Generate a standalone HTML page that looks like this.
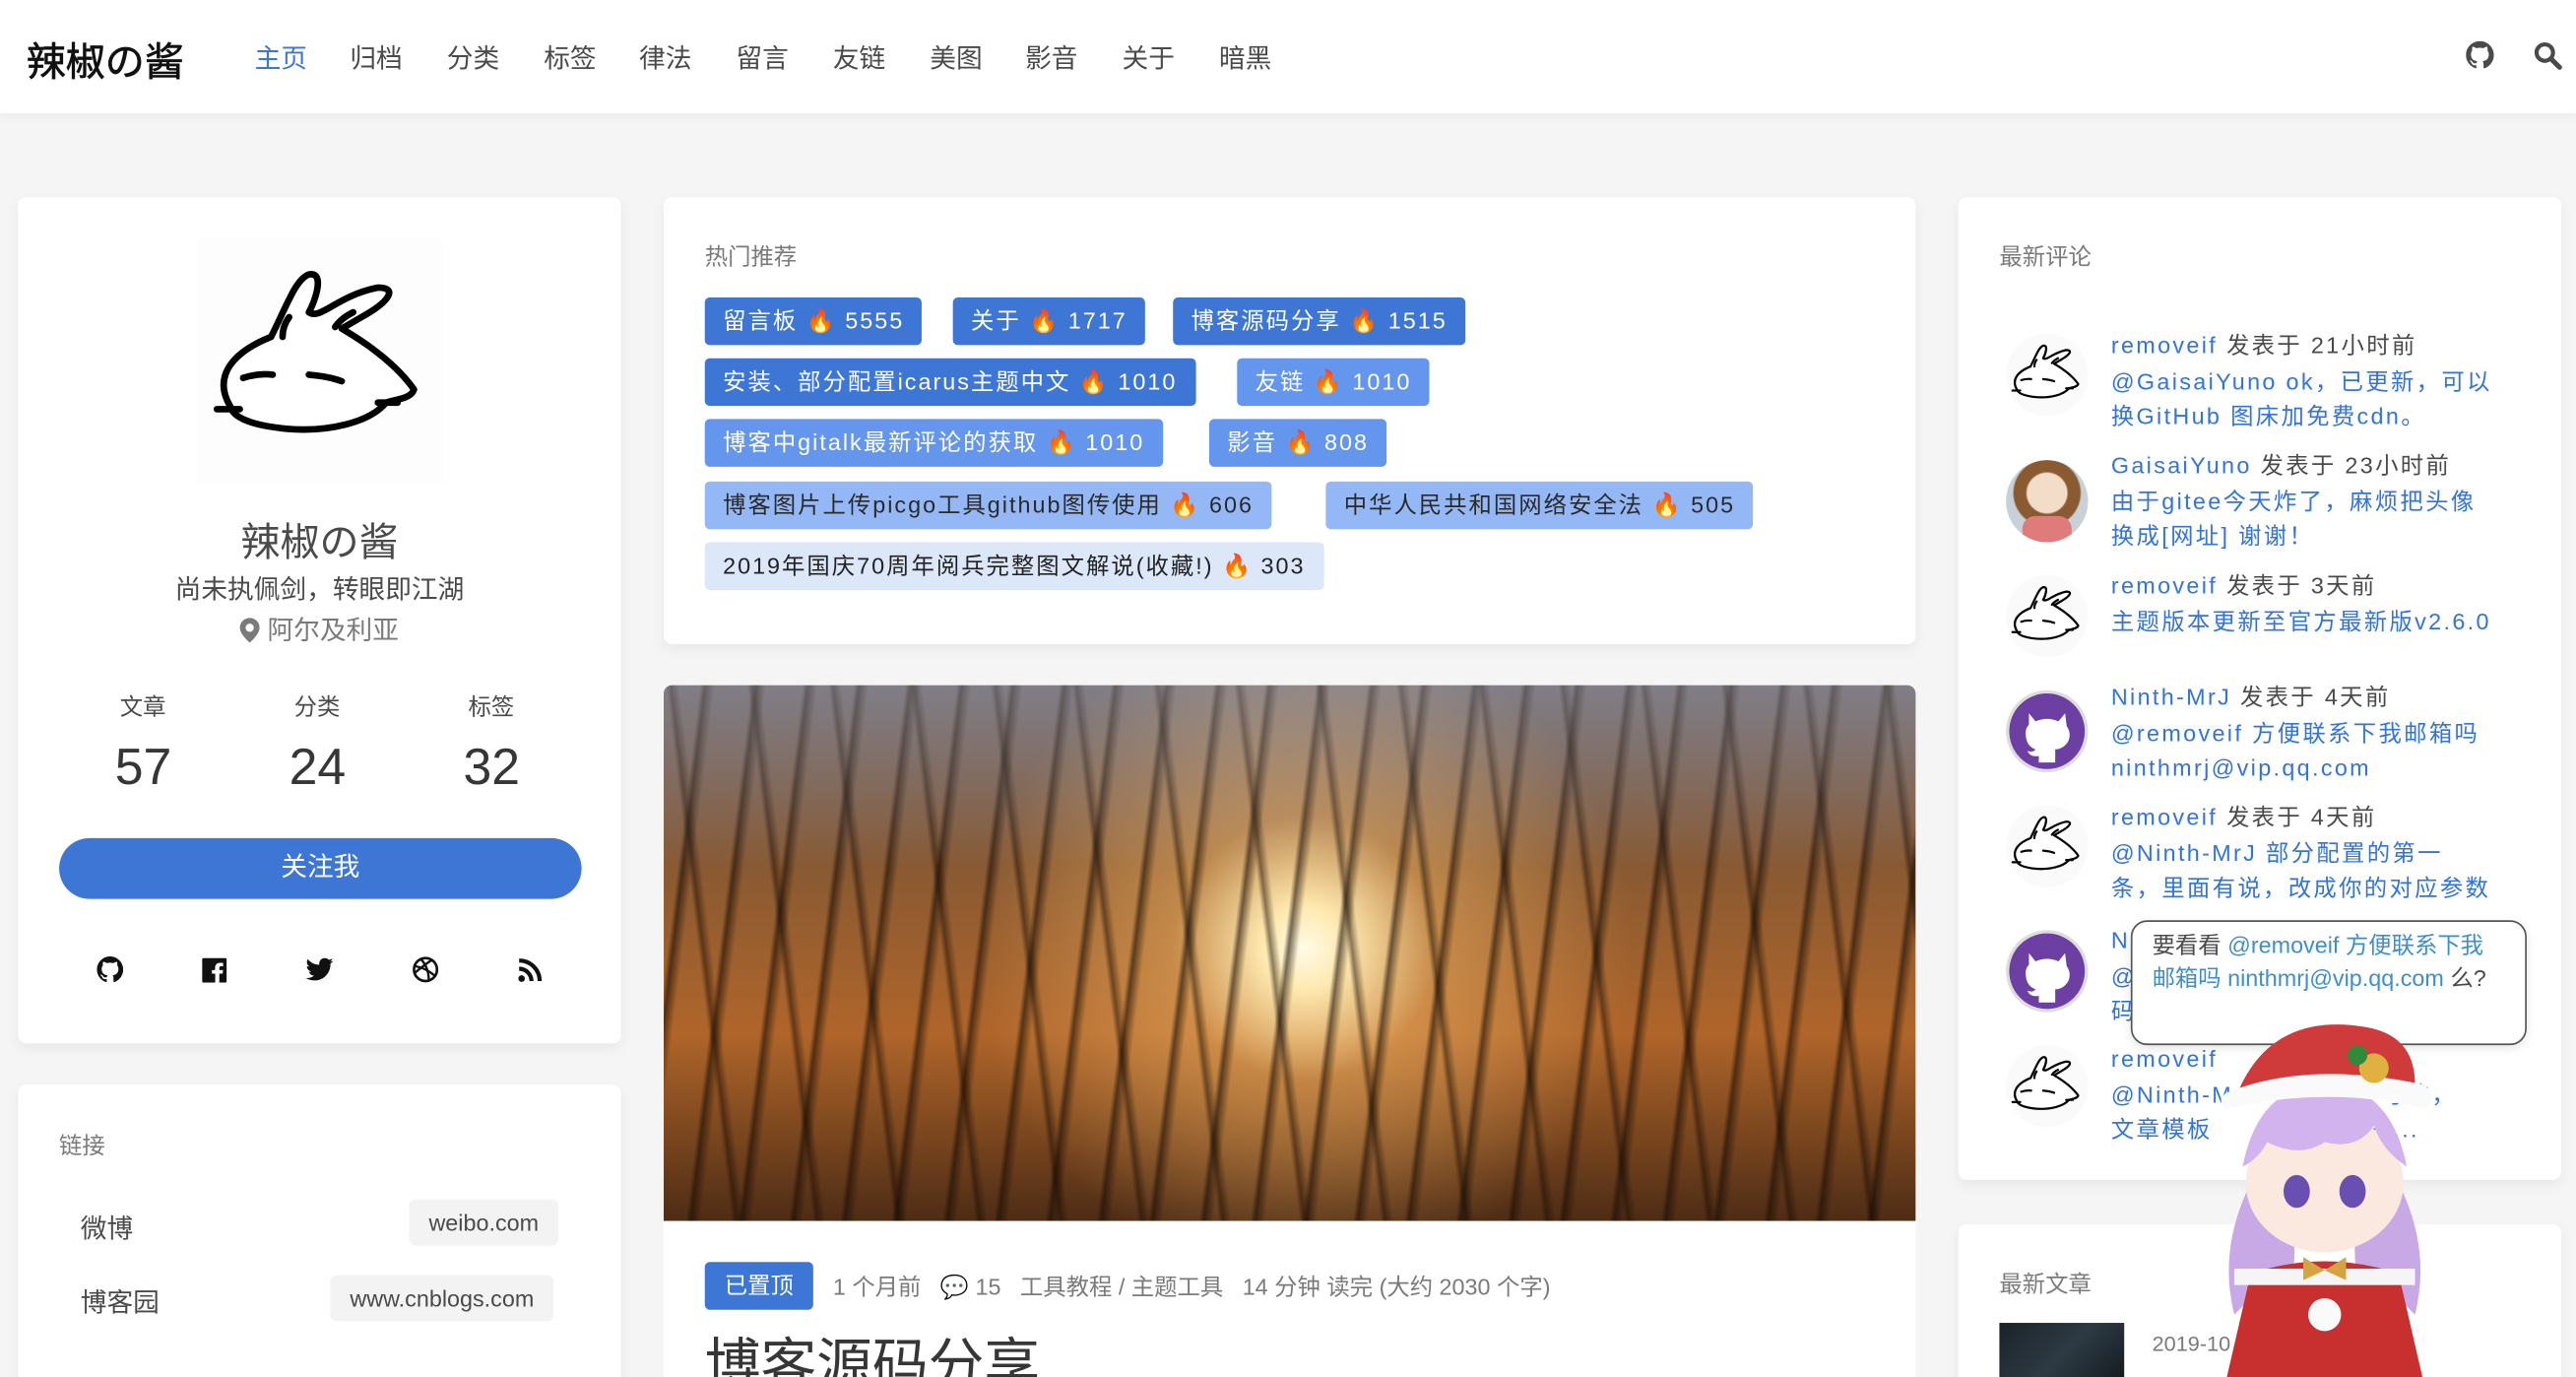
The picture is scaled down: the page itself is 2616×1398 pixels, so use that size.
<!DOCTYPE html>
<html><head><meta charset="utf-8">
<style>
*{margin:0;padding:0;box-sizing:border-box}
html,body{width:2616px;height:1398px;overflow:hidden;background:#f5f5f5}
#w{width:1568px;height:838px;transform:scale(1.66837);transform-origin:0 0;position:relative;font-family:"Liberation Sans","Noto Sans CJK SC",sans-serif;color:#4a4a4a;background:#f5f5f5}
.a{position:absolute}
.nav{left:0;top:0;width:1568px;height:69px;background:#fff;box-shadow:0 2px 6px rgba(0,0,0,.05)}
.nav span{position:absolute;top:22px;font-size:16px;color:#4a4a4a}
.card{background:#fff;border-radius:5px;box-shadow:0 3px 8px rgba(10,10,10,.06)}
.tag{position:absolute;height:29px;line-height:29px;padding:0 11px;border-radius:3px;font-size:14px;letter-spacing:1.2px;color:#fff;white-space:nowrap}
.t1{background:#3e76d6}.t2{background:#6596ee}.t3{background:#94b7f5;color:#2a2a2a}.t4{background:#dde7fa;color:#222}
.cm{position:absolute;left:1285px;font-size:14px;line-height:21.5px;letter-spacing:1.4px;color:#3273dc;white-space:nowrap}
.cm b{font-weight:normal;color:#4a4a4a}
.av{position:absolute;left:1221px;width:50px;height:50px;border-radius:50%;background:#fafafa;overflow:hidden}
.gh{background:#6e3fa3;border:2px solid #ddd}
</style></head><body><div id="w">
<div class="a nav">
<div class="a" style="left:16px;top:18px;font-size:24px;color:#111;-webkit-text-stroke:.4px #111">辣椒の酱</div>
<span style="left:155px;color:#3e76d6">主页</span><span style="left:213px">归档</span><span style="left:272px">分类</span><span style="left:331px">标签</span><span style="left:389px">律法</span><span style="left:448px">留言</span><span style="left:507px">友链</span><span style="left:566px">美图</span><span style="left:624px">影音</span><span style="left:683px">关于</span><span style="left:742px">暗黑</span>
<svg class="a" style="left:1501px;top:25px" width="17" height="17" viewBox="0 0 16 16"><path fill="#4a4a4a" d="M8 0C3.6 0 0 3.6 0 8c0 3.5 2.3 6.5 5.5 7.6.4.1.5-.2.5-.4v-1.4c-2.2.5-2.7-1-2.7-1-.4-.9-.9-1.2-.9-1.2-.7-.5.1-.5.1-.5.8.1 1.2.8 1.2.8.7 1.200 1.9.9 2.3.7.1-.5.3-.9.5-1.1-1.8-.2-3.6-.9-3.6-4 0-.9.3-1.6.8-2.1-.1-.2-.4-1 .1-2.1 0 0 .7-.2 2.2.8.6-.2 1.3-.3 2-.3s1.4.1 2 .3c1.5-1 2.2-.8 2.2-.8.4 1.1.2 1.9.1 2.1.5.6.8 1.3.8 2.1 0 3.1-1.9 3.8-3.6 4 .3.3.6.8.6 1.5v2.2c0 .2.1.5.6.4C13.7 14.5 16 11.5 16 8c0-4.4-3.6-8-8-8z"/></svg>
<svg class="a" style="left:1542px;top:25px" width="18" height="18" viewBox="0 0 18 18"><circle cx="7" cy="7" r="5" fill="none" stroke="#4a4a4a" stroke-width="2.5"/><path d="M11 11l5 5" stroke="#4a4a4a" stroke-width="3" stroke-linecap="round"/></svg>
</div>

<svg width="0" height="0" style="position:absolute"><defs><g id="rb"><path d="M20 102C10 85 20 70 45 60C55 40 60 25 68 22C78 20 72 38 68 45C75 50 85 35 110 30C122 30 118 38 100 48L88 55C100 62 120 75 132 92C130 98 120 98 115 100C105 112 80 118 55 116C35 114 22 110 20 102Z" fill="#fff" stroke="#000" stroke-width="4" stroke-linejoin="round"/><path d="M12 104h14M110 100l12 0M56 48c-3 4-4 8-4 12M95 45c-6 3-9 6-11 9M28 85q9-3 18-2M68 83q12 1 20 4" stroke="#000" stroke-width="4" fill="none" stroke-linecap="round"/></g></defs></svg>

<!-- left profile -->
<div class="a card" style="left:11px;top:120px;width:367px;height:515px">
<svg class="a" style="left:109px;top:25px" width="150" height="150" viewBox="0 0 150 150"><rect width="150" height="150" fill="#fdfdfd"/><use href="#rb"/></svg>
<div class="a" style="left:0;width:367px;top:190px;text-align:center;font-size:24px;color:#4a4a4a">辣椒の酱</div>
<div class="a" style="left:0;width:367px;top:225px;text-align:center;font-size:16px">尚未执佩剑，转眼即江湖</div>
<div class="a" style="left:0;width:367px;top:250px;text-align:center;font-size:16px;color:#7a7a7a"><svg width="12" height="15" viewBox="0 0 12 15" style="vertical-align:-2px"><path d="M6 0a6 6 0 0 0-6 6c0 4 6 9 6 9s6-5 6-9a6 6 0 0 0-6-6zm0 8.5a2.5 2.5 0 1 1 0-5 2.5 2.5 0 0 1 0 5z" fill="#7a7a7a"/></svg> 阿尔及利亚</div>
<div class="a" style="left:62px;top:300px;font-size:14px">文章</div><div class="a" style="left:168px;top:300px;font-size:14px">分类</div><div class="a" style="left:274px;top:300px;font-size:14px">标签</div>
<div class="a" style="left:59px;top:329px;font-size:31px;color:#363636">57</div><div class="a" style="left:165px;top:329px;font-size:31px;color:#363636">24</div><div class="a" style="left:271px;top:329px;font-size:31px;color:#363636">32</div>
<div class="a" style="left:25px;top:390px;width:318px;height:37px;border-radius:19px;background:#3e76d6;color:#fff;text-align:center;line-height:37px;font-size:16px">关注我</div>
<svg class="a" style="left:48px;top:462px" width="16" height="16" viewBox="0 0 16 16"><path fill="#111" d="M8 0C3.6 0 0 3.6 0 8c0 3.5 2.3 6.5 5.5 7.6.4.1.5-.2.5-.4v-1.4c-2.2.5-2.7-1-2.7-1-.4-.9-.9-1.2-.9-1.2-.7-.5.1-.5.1-.5.8.1 1.2.8 1.2.8.7 1.2 1.9.9 2.3.7.1-.5.3-.9.5-1.1-1.8-.2-3.6-.9-3.6-4 0-.9.3-1.6.8-2.1-.1-.2-.4-1 .1-2.1 0 0 .7-.2 2.2.8.6-.2 1.3-.3 2-.3s1.4.1 2 .3c1.5-1 2.2-.8 2.2-.8.4 1.1.2 1.9.1 2.1.5.6.8 1.3.8 2.1 0 3.1-1.9 3.8-3.6 4 .3.3.6.8.6 1.5v2.2c0 .2.1.5.6.4C13.7 14.5 16 11.5 16 8c0-4.4-3.6-8-8-8z"/></svg>
<svg class="a" style="left:112px;top:463px" width="15" height="15" viewBox="0 0 15 15"><rect width="15" height="15" rx="1" fill="#111"/><path d="M10.5 15V9.5h2l.3-2.2h-2.3V6c0-.6.2-1 1-1h1.3V3a15 15 0 0 0-1.9-.1c-1.8 0-3 1.1-3 3.1v1.3H6v2.2h2V15z" fill="#fff"/></svg>
<svg class="a" style="left:175px;top:463px" width="17" height="14" viewBox="0 0 24 20"><path fill="#111" d="M24 2.4a10 10 0 0 1-2.8.8A5 5 0 0 0 23.3.4a10 10 0 0 1-3.1 1.2A4.9 4.9 0 0 0 11.8 6 14 14 0 0 1 1.7.9a4.9 4.9 0 0 0 1.5 6.6 4.9 4.9 0 0 1-2.2-.6 4.9 4.9 0 0 0 3.9 4.9 5 5 0 0 1-2.2.1 4.9 4.9 0 0 0 4.6 3.4A9.9 9.9 0 0 1 0 17.3 14 14 0 0 0 7.5 19.5c9.1 0 14-7.5 14-14v-.6A10 10 0 0 0 24 2.4z"/></svg>
<svg class="a" style="left:240px;top:462px" width="16" height="16" viewBox="0 0 16 16"><circle cx="8" cy="8" r="7" fill="none" stroke="#111" stroke-width="1.6"/><path d="M2 6q6 1 12 6M5 1.5q5 5 5 13M1.5 10q6-5 10-7.5" fill="none" stroke="#111" stroke-width="1.4"/></svg>
<svg class="a" style="left:304px;top:463px" width="15" height="15" viewBox="0 0 15 15"><circle cx="2.5" cy="12.5" r="2" fill="#111"/><path d="M1 6.5a7.5 7.5 0 0 1 7.5 7.5M1 1.5A12.5 12.5 0 0 1 13.5 14" fill="none" stroke="#111" stroke-width="2.5"/></svg>
</div>

<!-- links -->
<div class="a card" style="left:11px;top:660px;width:367px;height:200px">
<div class="a" style="left:25px;top:27px;font-size:14px;color:#7a7a7a">链接</div>
<div class="a" style="left:38px;top:74px;font-size:16px">微博</div>
<div class="a" style="left:238px;top:70px;height:28px;line-height:28px;padding:0 12px;background:#f3f3f3;border-radius:4px;font-size:14px">weibo.com</div>
<div class="a" style="left:190px;top:116px;height:28px;line-height:28px;padding:0 12px;background:#f3f3f3;border-radius:4px;font-size:14px">www.cnblogs.com</div>
<div class="a" style="left:38px;top:119px;font-size:16px">博客园</div>
</div>

<!-- hot -->
<div class="a card" style="left:404px;top:120px;width:762px;height:272px">
<div class="a" style="left:25px;top:26px;font-size:14px;color:#7a7a7a">热门推荐</div>
<div class="tag t1" style="left:25px;top:61px">留言板 🔥 5555</div>
<div class="tag t1" style="left:176px;top:61px">关于 🔥 1717</div>
<div class="tag t1" style="left:310px;top:61px">博客源码分享 🔥 1515</div>
<div class="tag t1" style="left:25px;top:98px">安装、部分配置icarus主题中文 🔥 1010</div>
<div class="tag t2" style="left:349px;top:98px">友链 🔥 1010</div>
<div class="tag t2" style="left:25px;top:135px">博客中gitalk最新评论的获取 🔥 1010</div>
<div class="tag t2" style="left:332px;top:135px">影音 🔥 808</div>
<div class="tag t3" style="left:25px;top:173px">博客图片上传picgo工具github图传使用 🔥 606</div>
<div class="tag t3" style="left:403px;top:173px">中华人民共和国网络安全法 🔥 505</div>
<div class="tag t4" style="left:25px;top:210px">2019年国庆70周年阅兵完整图文解说(收藏!) 🔥 303</div>
</div>

<!-- image -->
<div class="a" style="left:404px;top:417px;width:762px;height:326px;border-radius:5px 5px 0 0;overflow:hidden;background:linear-gradient(180deg,#5e5a60 0%,#8a5a32 35%,#b0652a 65%,#4d2c15 100%)">
<div class="a" style="left:0;top:0;width:762px;height:326px;background:radial-gradient(circle at 390px 160px,#fffbe8 0,#ffe9b0 25px,rgba(240,180,100,.5) 80px,rgba(0,0,0,0) 200px)"></div>
<div class="a" style="left:0;top:0;width:762px;height:326px;background:repeating-linear-gradient(97deg,rgba(30,15,5,0) 0,rgba(30,15,5,0) 22px,rgba(25,12,4,.6) 25px,rgba(30,15,5,0) 31px),repeating-linear-gradient(83deg,rgba(30,15,5,0) 0,rgba(30,15,5,0) 41px,rgba(25,12,4,.5) 44px,rgba(30,15,5,0) 49px)"></div>
<div class="a" style="left:0;top:0;width:762px;height:110px;background:linear-gradient(180deg,rgba(210,210,225,.3),rgba(0,0,0,0))"></div>
</div>
<div class="a" style="left:404px;top:743px;width:762px;height:100px;background:#fff">
<div class="a" style="left:25px;top:25px;height:29px;line-height:29px;padding:0 12px;background:#3e76d6;color:#fff;border-radius:3px;font-size:14px">已置顶</div>
<div class="a" style="left:103px;top:30px;font-size:14px;color:#7a7a7a;white-space:nowrap">1 个月前 &nbsp; 💬 15 &nbsp; 工具教程 / 主题工具 &nbsp; 14 分钟 读完 (大约 2030 个字)</div>
<div class="a" style="left:25px;top:60px;font-size:34px;color:#363636">博客源码分享</div>
</div>

<!-- comments -->
<div class="a card" style="left:1192px;top:120px;width:367px;height:598px">
<div class="a" style="left:25px;top:26px;font-size:14px;color:#7a7a7a">最新评论</div>
</div>
<div class="av" style="top:203px"><svg width="50" height="50" viewBox="0 0 150 150"><use href="#rb"/></svg></div>
<div class="av" style="top:280px;background:radial-gradient(circle at 50% 40%,#f3dcc8 0 12px,#8a5a30 13px 20px,#c8d0d8 21px)"><div class="a" style="left:10px;top:34px;width:30px;height:16px;background:#e07b7b;border-radius:8px 8px 0 0"></div></div>
<div class="av" style="top:350px"><svg width="50" height="50" viewBox="0 0 150 150"><use href="#rb"/></svg></div>
<div class="av gh" style="top:420px"><svg width="46" height="46" viewBox="0 0 46 46"><path d="M12 12l4 5q7-3 14 0l4-5 1 8q3 4 1 9-3 5-8 5v8h-10v-4q-5 1-7-3 4 1 5-1-6-2-6-10 0-3 2-5z" fill="#fff"/></svg></div>
<div class="av" style="top:490px"><svg width="50" height="50" viewBox="0 0 150 150"><use href="#rb"/></svg></div>
<div class="av gh" style="top:566px"><svg width="46" height="46" viewBox="0 0 46 46"><path d="M12 12l4 5q7-3 14 0l4-5 1 8q3 4 1 9-3 5-8 5v8h-10v-4q-5 1-7-3 4 1 5-1-6-2-6-10 0-3 2-5z" fill="#fff"/></svg></div>
<div class="av" style="top:636px"><svg width="50" height="50" viewBox="0 0 150 150"><use href="#rb"/></svg></div>
<div class="cm" style="top:200px">removeif <b>发表于 21小时前</b><br>@GaisaiYuno ok，已更新，可以<br>换GitHub 图床加免费cdn。</div>
<div class="cm" style="top:273px">GaisaiYuno <b>发表于 23小时前</b><br>由于gitee今天炸了，麻烦把头像<br>换成[网址] 谢谢！</div>
<div class="cm" style="top:346px">removeif <b>发表于 3天前</b><br>主题版本更新至官方最新版v2.6.0</div>
<div class="cm" style="top:414px">Ninth-MrJ <b>发表于 4天前</b><br>@removeif 方便联系下我邮箱吗<br>ninthmrj@vip.qq.com</div>
<div class="cm" style="top:487px">removeif <b>发表于 4天前</b><br>@Ninth-MrJ 部分配置的第一<br>条，里面有说，改成你的对应参数</div>
<div class="cm" style="top:562px">N<br>@<br>码</div>
<div class="cm" style="top:634px">removeif<br>@Ninth-M &nbsp; &nbsp; &nbsp; &nbsp; &nbsp; &nbsp; &nbsp; &nbsp; 写的，<br>文章模板 &nbsp; &nbsp; &nbsp; &nbsp; &nbsp; &nbsp; &nbsp; 章的...</div>

<!-- latest posts -->
<div class="a card" style="left:1192px;top:745px;width:367px;height:120px">
<div class="a" style="left:25px;top:26px;font-size:14px;color:#7a7a7a">最新文章</div>
<div class="a" style="left:25px;top:60px;width:76px;height:40px;background:linear-gradient(135deg,#1a2228,#2d3a44 50%,#12181c)"></div>
<div class="a" style="left:118px;top:65px;font-size:13px;color:#7a7a7a">2019-10</div>
</div>

<!-- mascot -->
<div class="a" style="left:1297px;top:560px;width:241px;height:76px;background:#fff;border:1.5px solid #555;border-radius:10px;box-shadow:0 2px 6px rgba(0,0,0,.1);padding:4px 12px;font-size:14px;line-height:20px;color:#4a4a4a">要看看 <span style="color:#3e8ecf">@removeif 方便联系下我邮箱吗 ninthmrj@vip.qq.com</span> 么?</div>
<svg class="a" style="left:1330px;top:600px" width="170" height="240" viewBox="0 0 170 240">
<path d="M40 120q-20 40-10 80l20-20 10 20q10-30 5-60z" fill="#c9a8e6"/>
<path d="M130 120q20 40 10 80l-20-20-10 20q-10-30-5-60z" fill="#c9a8e6"/>
<ellipse cx="85" cy="120" rx="48" ry="42" fill="#fbe8df"/>
<path d="M35 110q10-50 50-50t50 50q-15-10-20-25-10 15-30 10-15 10-35 0-5 10-15 15z" fill="#d2b3ee"/>
<ellipse cx="68" cy="125" rx="8" ry="10" fill="#6a4fb3"/><ellipse cx="102" cy="125" rx="8" ry="10" fill="#6a4fb3"/>
<path d="M30 70q20-55 80-45 30 5 30 35-50-10-110 10z" fill="#cf3a3a"/>
<path d="M25 65q50-20 120-5 8 5 2 15-60-15-122 0-6-5 0-10z" fill="#fafafa"/>
<circle cx="115" cy="50" r="9" fill="#e0b040"/><circle cx="105" cy="42" r="6" fill="#2f8a3a"/>
<path d="M40 175q45-15 90 0l15 65H25z" fill="#c8302f"/>
<path d="M30 172h110v10H30z" fill="#f5f5f5"/>
<circle cx="85" cy="200" r="10" fill="#fafafa"/>
<path d="M72 165l13 8 13-8v14l-13-6-13 6z" fill="#d4a440"/>
</svg>
</div></body></html>
